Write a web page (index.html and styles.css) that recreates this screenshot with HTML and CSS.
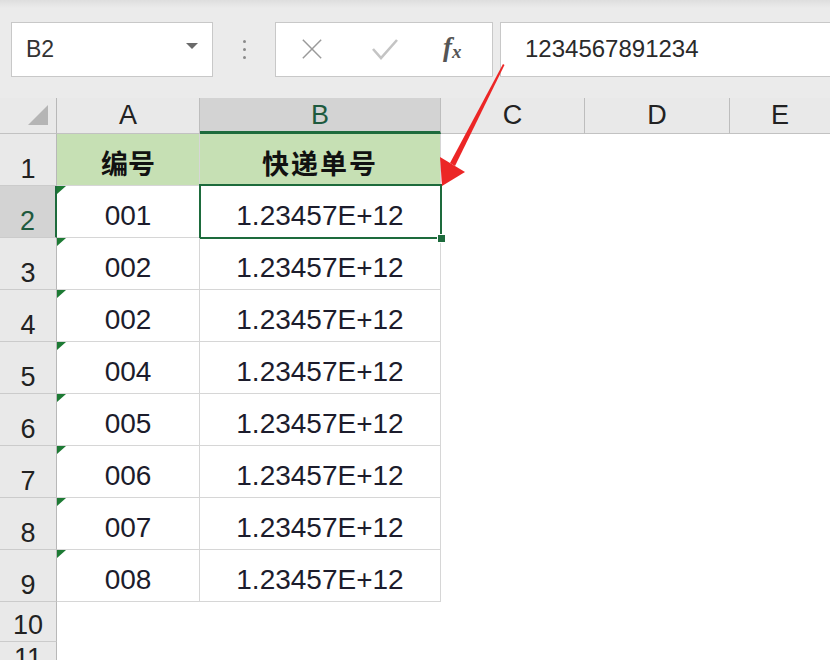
FILE: index.html
```html
<!DOCTYPE html>
<html lang="zh-CN">
<head>
    <meta charset="UTF-8">
    <title>快递单号</title>
    <link rel="stylesheet" href="styles.css">
</head>
<body>

    <!-- 编辑栏 -->
    <div class="toolbar">
        <div class="namebox">
            <span>B2</span>
            <span class="caret"></span>
        </div>
        <div class="grip"><i></i><i></i><i></i></div>
        <div class="fx-buttons">
            <svg class="btn-cancel" width="24" height="24" viewBox="0 0 24 24">
                <path d="M2 2 L22 22 M22 2 L2 22" stroke="#9a9a9a" stroke-width="1.6" fill="none"/>
            </svg>
            <svg class="btn-ok" width="28" height="24" viewBox="0 0 28 24">
                <path d="M2 12 L10 21 L26 3" stroke="#c4c4c4" stroke-width="2.6" fill="none"/>
            </svg>
            <span class="fx">f<sub>x</sub></span>
        </div>
        <div class="formula">1234567891234</div>
    </div>

    <!-- 表格 -->
    <div class="sheet">
        <div class="corner"><span class="select-all"></span></div>
        <div class="col-head">A</div>
        <div class="col-head active">B</div>
        <div class="col-head">C</div>
        <div class="col-head">D</div>
        <div class="col-head last">E</div>

        <div class="row-head">1</div>
        <div class="cell title">编号</div>
        <div class="cell title wide">快递单号</div>
        <div class="blank"></div>

        <div class="row-head active">2</div>
        <div class="cell num"><b class="flag"></b>001</div>
        <div class="cell selected">1.23457E+12<span class="handle"></span></div>
        <div class="blank"></div>

        <div class="row-head">3</div>
        <div class="cell num"><b class="flag"></b>002</div>
        <div class="cell">1.23457E+12</div>
        <div class="blank"></div>

        <div class="row-head">4</div>
        <div class="cell num"><b class="flag"></b>002</div>
        <div class="cell">1.23457E+12</div>
        <div class="blank"></div>

        <div class="row-head">5</div>
        <div class="cell num"><b class="flag"></b>004</div>
        <div class="cell">1.23457E+12</div>
        <div class="blank"></div>

        <div class="row-head">6</div>
        <div class="cell num"><b class="flag"></b>005</div>
        <div class="cell">1.23457E+12</div>
        <div class="blank"></div>

        <div class="row-head">7</div>
        <div class="cell num"><b class="flag"></b>006</div>
        <div class="cell">1.23457E+12</div>
        <div class="blank"></div>

        <div class="row-head">8</div>
        <div class="cell num"><b class="flag"></b>007</div>
        <div class="cell">1.23457E+12</div>
        <div class="blank"></div>

        <div class="row-head">9</div>
        <div class="cell num"><b class="flag"></b>008</div>
        <div class="cell">1.23457E+12</div>
        <div class="blank"></div>

        <div class="row-head">10</div>
        <div class="empty"></div>

        <div class="row-head">11</div>
        <div class="empty"></div>
    </div>

    <!-- 红色箭头 -->
    <svg class="arrow" width="830" height="660" viewBox="0 0 830 660">
        <polygon points="503,64 504.5,65 455,166 450,163" fill="#ec2626"/>
        <polygon points="442,186 440,157 465,172" fill="#ec2626"/>
    </svg>

</body>
</html>
```

FILE: styles.css
```css
body {
    margin: 0;
    width: 830px;
    height: 660px;
    overflow: hidden;
    background-color: #fff;
    font-family: "Liberation Sans", "Noto Sans CJK SC", sans-serif;
    color: #222;
    position: relative;
}

/* 编辑栏 */
.toolbar {
    display: flex;
    align-items: center;
    height: 98px;
    padding-left: 11px;
    box-sizing: border-box;
    background-color: #ebebeb;
    background-image: linear-gradient(#dedede, #ebebeb 8px);
}

.namebox,
.fx-buttons,
.formula {
    height: 55px;
    box-sizing: border-box;
    background-color: #fff;
    border: 1px solid #c8c8c8;
    display: flex;
    align-items: center;
}

.namebox {
    width: 202px;
    padding: 0 14px 0 14px;
    justify-content: space-between;
    font-size: 23px;
    color: #333;
}

.caret {
    width: 0;
    height: 0;
    border-left: 6px solid transparent;
    border-right: 6px solid transparent;
    border-top: 6px solid #6a6a6a;
    margin-top: -6px;
}

.grip {
    width: 62px;
    display: flex;
    flex-direction: column;
    align-items: center;
    gap: 5px;
}

.grip i {
    width: 3px;
    height: 3px;
    border-radius: 50%;
    background-color: #8a8a8a;
}

.fx-buttons {
    width: 218px;
    padding-left: 25px;
}

.btn-cancel {
    margin-right: 48px;
    width: 22px;
    height: 22px;
}

.btn-ok {
    margin-right: 44px;
}

.fx {
    font-family: "Liberation Serif", serif;
    font-style: italic;
    font-weight: bold;
    font-size: 27px;
    color: #555;
    margin-top: -4px;
}

.fx sub {
    font-size: 19px;
    vertical-align: -2px;
}

.formula {
    flex: 1;
    margin-left: 7px;
    border-right: none;
    padding-left: 24px;
    font-size: 24px;
    color: #2a2a2a;
}

/* 表格 */
.sheet {
    display: grid;
    grid-template-columns: 57px 143px 241px 144px 145px 1fr;
    grid-template-rows: 36px repeat(9, 52px) 40px 1fr;
    height: 562px;
}

.corner,
.col-head,
.row-head {
    background-color: #e9e9e9;
    box-sizing: border-box;
}

.corner {
    border-right: 1px solid #b8b8b8;
    border-bottom: 1px solid #c2c2c2;
    position: relative;
}

.select-all {
    position: absolute;
    right: 8px;
    bottom: 8px;
    width: 0;
    height: 0;
    border-left: 20px solid transparent;
    border-bottom: 20px solid #b5b5b5;
}

.col-head {
    border-right: 1px solid #bdbdbd;
    border-bottom: 1px solid #c2c2c2;
    display: flex;
    align-items: flex-end;
    justify-content: center;
    padding-bottom: 2px;
    font-size: 27px;
    color: #222;
}

.col-head.last {
    border-right: none;
}

.col-head.active {
    background-color: #d3d3d3;
    border-bottom: 3px solid #1d6b3c;
    padding-bottom: 0;
    color: #1e5a3e;
}

.row-head {
    border-right: 1px solid #b8b8b8;
    border-bottom: 1px solid #cbcbcb;
    display: flex;
    align-items: flex-end;
    justify-content: center;
    font-size: 27px;
    line-height: 1.2;
    color: #222;
}

.row-head.active {
    background-color: #d3d3d3;
    border-right: 2px solid #1d6b3c;
    color: #1e5a3e;
}

.cell {
    border-right: 1px solid #d6d6d6;
    border-bottom: 1px solid #d6d6d6;
    box-sizing: border-box;
    display: flex;
    align-items: center;
    justify-content: center;
    padding-top: 9px;
    font-size: 28px;
    color: #1c1c2c;
    position: relative;
}

.cell.title {
    background-color: #c6e0b4;
    font-family: "Noto Sans CJK SC", sans-serif;
    font-weight: bold;
    font-size: 27px;
    padding-top: 6px;
    color: #111;
}

.cell.wide {
    letter-spacing: 2px;
}

.flag {
    position: absolute;
    left: 0;
    top: 0;
    width: 0;
    height: 0;
    border-top: 8px solid #1d7a34;
    border-right: 9px solid transparent;
}

.cell.selected::after {
    content: "";
    position: absolute;
    left: -1px;
    top: -2px;
    right: -2px;
    bottom: -2px;
    border: 2px solid #1d6b3c;
}

.handle {
    position: absolute;
    right: -6px;
    bottom: -6px;
    width: 7px;
    height: 7px;
    background-color: #1d6b3c;
    border: 1px solid #fff;
    z-index: 1;
}

.blank {
    grid-column: span 3;
}

.empty {
    grid-column: span 5;
}

.arrow {
    position: absolute;
    left: 0;
    top: 0;
    pointer-events: none;
}
```
